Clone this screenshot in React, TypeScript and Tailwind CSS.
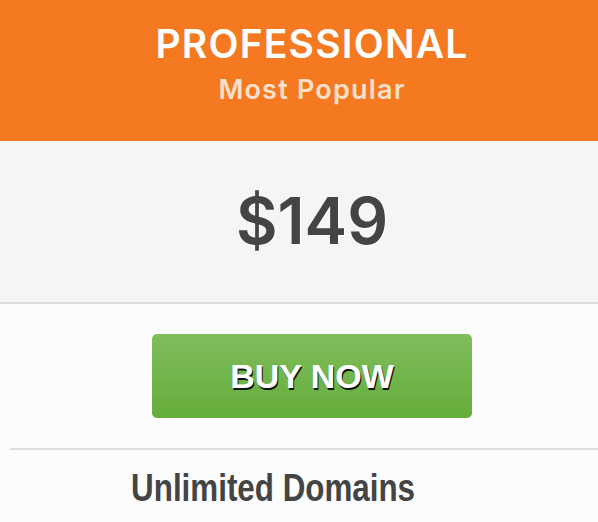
export default function App() {
  return (
    <div className="w-[598px] h-[522px] overflow-hidden bg-[#fcfcfc]">
      <div className="w-[624px]">
        {/* Header */}
        <div className="h-[141px] bg-[#f47920] pt-[22px] text-center font-['Inter',sans-serif]">
          <div className="text-[39px] leading-[44px] font-semibold tracking-[1.2px] text-white">PROFESSIONAL</div>
          <div className="mt-[8px] text-[27px] leading-[32px] font-semibold tracking-[1.2px] text-[#fde0cb]">Most Popular</div>
        </div>

        {/* Price */}
        <div className="h-[163px] flex items-center justify-center bg-[#f5f5f5] border-b-2 border-[#dcdcdc] pb-[2px]">
          <span className="font-['Inter',sans-serif] text-[64px] leading-[64px] font-semibold text-[#444] [text-shadow:1px_1px_0_#fff]">
            $149
          </span>
        </div>

        {/* Button */}
        <div className="pt-[30px] pb-[30px] flex justify-center">
          <button className="w-[320px] h-[84px] rounded-[5px] bg-gradient-to-b from-[#80bd5c] to-[#64ad39] flex items-center justify-center">
            <span className="font-['Liberation_Sans',Arial,sans-serif] font-bold text-[34px] text-white [text-shadow:1px_2px_0_#111]">
              BUY NOW
            </span>
          </button>
        </div>

        {/* Features */}
        <div className="mx-[10px] border-t-2 border-[#dddddd]">
          <div className="pr-[78px] pt-[16px] text-center">
            <span className="inline-block scale-x-[0.825] font-['Liberation_Sans',Arial,sans-serif] font-bold text-[38px] leading-[44px] text-[#444]">
              Unlimited Domains
            </span>
          </div>
        </div>
      </div>
    </div>
  );
}
